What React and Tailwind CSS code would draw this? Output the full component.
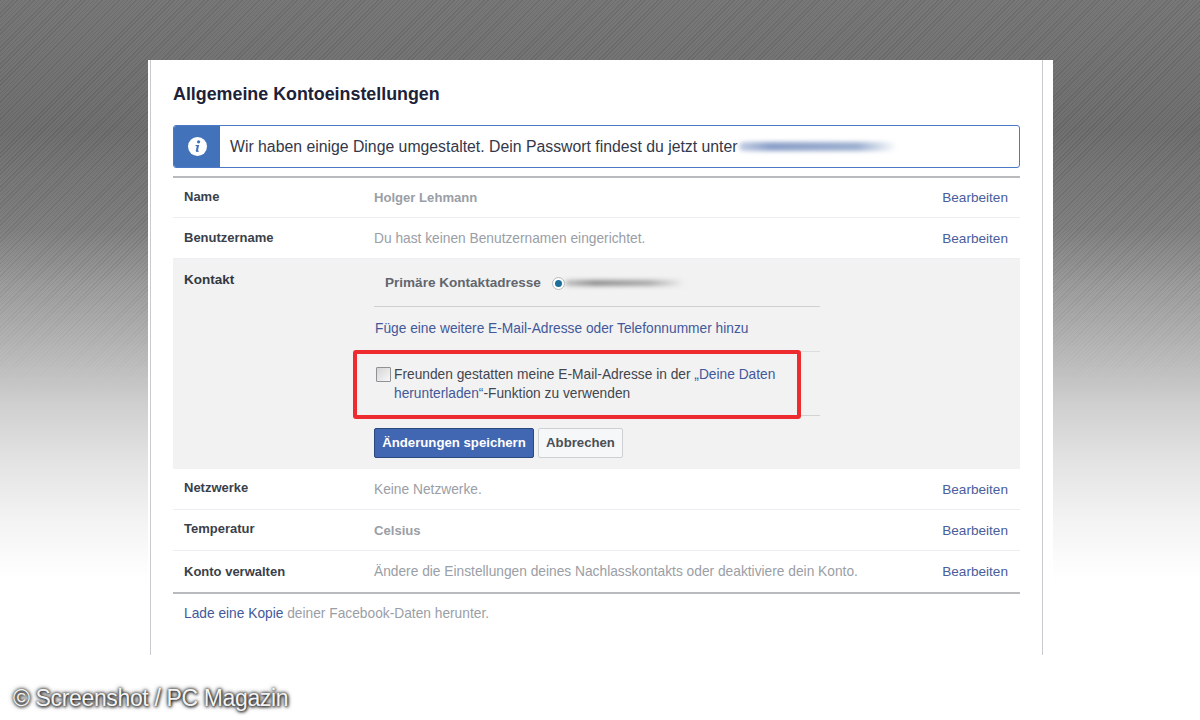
const edit = "Bearbeiten";
function Row({ label, value, last, first, valueBold, h = "h-[41px]", labelShift = "-mt-[2px]" }) {
  const valueShift = valueBold || last ? "mt-[1px]" : "mt-[2px]";
  const editShift = first || last ? "mt-[1px]" : "mt-[2px]";
  return (
    <div className={`flex ${h} items-center pl-[11px] pr-[12px] ${last ? "" : "border-b border-[#eceef1]"}`}>
      <div className={`w-[190px] shrink-0 text-[13px] font-bold text-[#3a3f4a] ${labelShift}`}>{label}</div>
      <div className={`flex-1 ${valueShift} ${valueBold ? "font-bold text-[13.1px]" : "text-[13.75px]"} text-[#9a9ea6]`}>{value}</div>
      <a className={`${editShift} text-[13.6px] text-[#4a5d9c]`}>{edit}</a>
    </div>
  );
}

export default function App() {
  return (
    <div className="relative w-[1200px] h-[720px] overflow-hidden font-['Liberation_Sans',Arial,sans-serif] bg-[linear-gradient(180deg,#727272_0px,#6a6a6a_130px,#7c7c7c_230px,#9a9a9a_288px,#b4b4b4_346px,#cfcfcf_404px,#e3e3e3_461px,#f3f3f3_519px,#fefefe_575px,#ffffff_590px)]">
      <div className="absolute inset-0 opacity-[0.04] bg-[repeating-linear-gradient(135deg,#000000_0px,#000000_1px,#ffffff_1px,#ffffff_3px)] [mask-image:linear-gradient(180deg,#000_0px,#000_280px,transparent_400px)]" />
      <div className="relative ml-[148px] mt-[60px] pt-0 w-[905px] h-[595px] bg-white px-[2px] inline-block align-top">
        <div className="h-full w-[893px] border-l border-r border-[#c9cbd0] pl-[22px] pr-[21px] relative">
          <h1 className="pt-[22px] text-[17.85px] leading-[24px] font-bold text-[#1c2238]">Allgemeine Kontoeinstellungen</h1>
          <div className="mt-[19px] flex h-[43px] w-[847px] items-stretch rounded-[3px] border border-[#4c78c8] overflow-hidden">
            <div className="flex w-[46px] shrink-0 items-center justify-center bg-[#4172ba]">
              <svg width="19" height="19" viewBox="0 0 19 19">
                <circle cx="9.5" cy="9.5" r="9.5" fill="#fff" />
                <circle cx="10.6" cy="4.8" r="1.6" fill="#4172ba" />
                <path d="M7.6 8h3.6l-1.3 5.4c-.1.5.3.6 1.2.2l-.2.9c-1.7.7-3.5.6-3.1-1l1-4.3-1.3-.3z" fill="#4172ba" />
              </svg>
            </div>
            <div className="flex flex-1 items-center pl-[10px] text-[15.8px] text-[#33384a]">
              <span>Wir haben einige Dinge umgestaltet. Dein Passwort findest du jetzt unter</span>
              <span className="ml-[1px] h-[9px] w-[158px] rounded-full bg-[linear-gradient(90deg,#c4cfe4,#8b9fc8_20%,#9db0d0_75%,#ffffff)] blur-[2px]" />
            </div>
          </div>
          <div className="mt-[8px] w-[847px] border-t-2 border-b-2 border-[#b8babd]">
            <Row label="Name" value="Holger Lehmann" valueBold first h="h-[40px]" />
            <Row label="Benutzername" value="Du hast keinen Benutzernamen eingerichtet." labelShift="-mt-[0px]" />
            <div className="flex h-[210px] bg-[#f2f2f2] pl-[11px]">
              <div className="w-[190px] shrink-0 pt-[11px] text-[13.5px] font-bold text-[#33373f]">Kontakt</div>
              <div className="w-[446px]">
                <div className="flex h-[48px] items-center border-b border-[#cfd0d2] pl-[11px] pt-[1px]">
                  <span className="text-[13.55px] font-bold text-[#62666e]">Primäre Kontaktadresse</span>
                  <span className="ml-[11px] flex h-[13px] w-[13px] items-center justify-center rounded-full border border-[#b5bcc4] bg-white">
                    <span className="h-[7px] w-[7px] rounded-full bg-[#1d6f9c]" />
                  </span>
                  <span className="h-[6px] w-[120px] rounded-full bg-[linear-gradient(90deg,#c0c0c0,#8e8e8e_25%,#a8a8a8_70%,#f2f2f2)] blur-[2px]" />
                </div>
                <div className="flex h-[45px] items-center border-b border-[#dcdddf] pl-[1px] text-[13.75px] text-[#43589a]">
                  Füge eine weitere E-Mail-Adresse oder Telefonnummer hinzu
                </div>
                <div className="flex h-[64px] items-start border-b border-[#d2d3d5] pl-[2px] pt-[13px]">
                  <span className="mt-[2px] h-[15px] w-[15px] shrink-0 rounded-[1px] border border-[#8f9195] bg-[linear-gradient(135deg,#d4d4d4,#f8f8f8)]" />
                  <p className="ml-[3px] w-[400px] text-[13.75px] leading-[19px] text-[#42464e]">
                    Freunden gestatten meine E-Mail-Adresse in der <a className="text-[#43589a]">„Deine Daten herunterladen“</a>-Funktion zu verwenden
                  </p>
                </div>
                <div className="mt-[12px] flex gap-[4px]">
                  <button className="h-[30px] w-[160px] rounded-[2px] border border-[#29487d] bg-[#4267b2] text-[13.2px] font-bold text-white">Änderungen speichern</button>
                  <button className="h-[30px] w-[85px] rounded-[2px] border border-[#ced0d4] bg-[#f6f7f9] text-[13.2px] font-bold text-[#4b4f56]">Abbrechen</button>
                </div>
              </div>
            </div>
            <Row label="Netzwerke" value="Keine Netzwerke." />
            <Row label="Temperatur" value="Celsius" valueBold />
            <Row label="Konto verwalten" value="Ändere die Einstellungen deines Nachlasskontakts oder deaktiviere dein Konto." last labelShift="-mt-[0px]" />
          </div>
          <p className="mt-[10px] pl-[11px] text-[13.75px] leading-[20px] text-[#9a9ea6]">
            <a className="text-[#43589a]">Lade eine Kopie</a> deiner Facebook-Daten herunter.
          </p>
        </div>
      </div>
      <div className="absolute left-[353px] top-[350px] h-[69px] w-[448px] rounded-[3px] border-[4px] border-[#ee2b2e]" />
      <div className="absolute left-[13px] top-[683px] text-[23px] leading-[30px] tracking-[-0.36px] text-[#f4f4f4] [text-shadow:0_0_3px_#222,0_0_5px_#333,1px_1px_3px_#333]">© Screenshot / PC Magazin</div>
    </div>
  );
}
